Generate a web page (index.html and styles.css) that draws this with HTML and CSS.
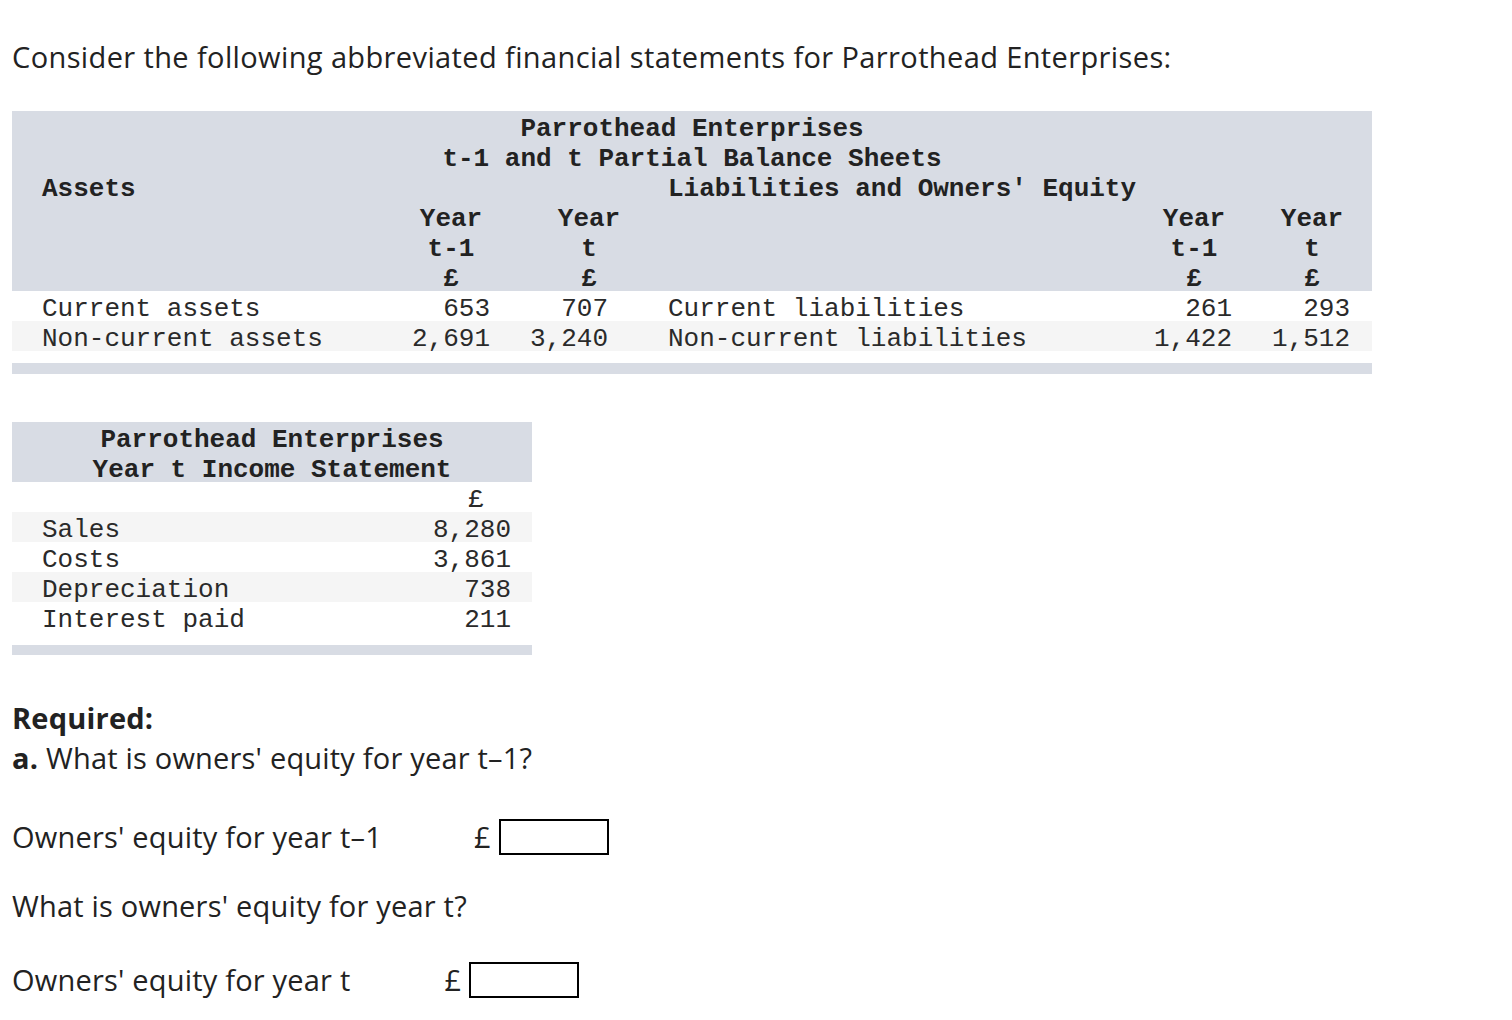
FILE: index.html
```html
<!DOCTYPE html>
<html>
<head>
<meta charset="utf-8">
<link rel="stylesheet" href="styles.css">
</head>
<body>
<p class="intro">Consider the following abbreviated financial statements for Parrothead Enterprises:</p>

<table class="fin bs">
  <colgroup>
    <col class="c-a"><col class="c-b"><col class="c-c"><col class="c-d"><col class="c-e"><col class="c-f">
  </colgroup>
  <thead>
    <tr class="hd"><th colspan="6" class="ctr">Parrothead Enterprises</th></tr>
    <tr class="hd"><th colspan="6" class="ctr">t-1 and t Partial Balance Sheets</th></tr>
    <tr class="hd"><th colspan="3" class="lbl-a">Assets</th><th colspan="3" class="lbl-d">Liabilities and Owners' Equity</th></tr>
    <tr class="hd"><th></th><th class="h-b">Year</th><th class="h-c">Year</th><th></th><th class="h-e">Year</th><th class="h-f">Year</th></tr>
    <tr class="hd"><th></th><th class="h-b">t-1</th><th class="h-c">t</th><th></th><th class="h-e">t-1</th><th class="h-f">t</th></tr>
    <tr class="hd"><th></th><th class="h-b">£</th><th class="h-c">£</th><th></th><th class="h-e">£</th><th class="h-f">£</th></tr>
  </thead>
  <tbody>
    <tr><td class="lbl-a">Current assets</td><td class="n-b">653</td><td class="n-c">707</td><td class="lbl-d">Current liabilities</td><td class="n-e">261</td><td class="n-f">293</td></tr>
    <tr class="alt"><td class="lbl-a">Non-current assets</td><td class="n-b">2,691</td><td class="n-c">3,240</td><td class="lbl-d">Non-current liabilities</td><td class="n-e">1,422</td><td class="n-f">1,512</td></tr>
    <tr class="gap"><td colspan="6"></td></tr>
    <tr class="bar"><td colspan="6"></td></tr>
  </tbody>
</table>

<table class="fin is">
  <colgroup><col class="i-a"><col class="i-b"></colgroup>
  <thead>
    <tr class="hd"><th colspan="2" class="ctr">Parrothead Enterprises</th></tr>
    <tr class="hd"><th colspan="2" class="ctr">Year t Income Statement</th></tr>
  </thead>
  <tbody>
    <tr><td></td><td class="i-cur">£</td></tr>
    <tr class="alt"><td class="lbl-a">Sales</td><td class="i-n">8,280</td></tr>
    <tr><td class="lbl-a">Costs</td><td class="i-n">3,861</td></tr>
    <tr class="alt"><td class="lbl-a">Depreciation</td><td class="i-n">738</td></tr>
    <tr><td class="lbl-a">Interest paid</td><td class="i-n">211</td></tr>
    <tr class="gap2"><td colspan="2"></td></tr>
    <tr class="bar2"><td colspan="2"></td></tr>
  </tbody>
</table>

<div class="req">
  <p class="req-title">Required:</p>
  <p class="q"><b>a.</b> What is owners' equity for year t–1?</p>
  <div class="ans ans1"><span class="ans-lbl">Owners' equity for year t–1</span><span class="cur cur1">£</span><span class="box"></span></div>
  <p class="q q2">What is owners' equity for year t?</p>
  <div class="ans ans2"><span class="ans-lbl">Owners' equity for year t</span><span class="cur cur2">£</span><span class="box"></span></div>
</div>
</body>
</html>
```

FILE: styles.css
```css
html, body {
  margin: 0;
  padding: 0;
  background: #fff;
}
body {
  padding: 37px 12px 0 12px;
  font-family: "Open Sans", Lato, sans-serif;
  color: #222;
}
.intro {
  margin: 0;
  font-size: 29px;
  letter-spacing: 0.38px;
  line-height: 40px;
}
.fin {
  border-collapse: collapse;
  table-layout: fixed;
  font-family: "Liberation Mono", "Courier New", monospace;
  font-size: 26px;
  color: #222;
}
.fin th, .fin td {
  padding: 6px 0 0 0;
  height: 24px;
  line-height: 24px;
  white-space: nowrap;
  overflow: visible;
}
.fin td { color: #2a2a2a; }
.fin th { font-weight: bold; }
.bs {
  width: 1360px;
  margin-top: 34px;
}
.c-a { width: 388px; }
.c-b { width: 102px; }
.c-c { width: 146px; }
.c-d { width: 495px; }
.c-e { width: 102px; }
.c-f { width: 127px; }
.hd th { background: #d8dce4; }
.ctr { text-align: center; }
.lbl-a { text-align: left; padding-left: 30px !important; }
.lbl-d { text-align: left; padding-left: 20px !important; }
.h-b, .h-e { text-align: center; }
.h-c { text-align: center; padding-left: 28px !important; }
.h-f { text-align: center; padding-left: 7px !important; }
.n-b { text-align: right; padding-right: 12px !important; }
.n-c { text-align: right; padding-right: 40px !important; }
.n-e { text-align: right; padding-right: 13px !important; }
.n-f { text-align: right; padding-right: 22px !important; }
.alt td { background: #f5f5f5; }
.fin .gap td { height: 12px; line-height: 12px; padding: 0; }
.fin .bar td { height: 11px; line-height: 11px; padding: 0; background: #d8dce4; }

.is {
  width: 520px;
  margin-top: 48px;
}
.i-a { width: 408px; }
.i-b { width: 112px; }
.i-cur { text-align: center; }
.i-n { text-align: right; padding-right: 21px !important; }
.fin .gap2 td { height: 13px; line-height: 13px; padding: 0; }
.fin .bar2 td { height: 10px; line-height: 10px; padding: 0; background: #d8dce4; }

.req {
  margin-top: 43px;
  font-size: 29px;
  letter-spacing: 0.2px;
  line-height: 40px;
}
.req p { margin: 0; }
.req-title { font-weight: bold; }
.q b { font-weight: bold; }
.ans {
  display: flex;
  align-items: center;
  height: 40px;
}
.ans1 { margin-top: 39px; }
.q2 { margin-top: 29px !important; }
.ans2 { margin-top: 34px; }
.cur { margin-right: 8px; }
.cur1 { margin-left: 92px; }
.cur2 { margin-left: 94px; }
.box {
  display: inline-block;
  width: 106px;
  height: 32px;
  border: 2px solid #000;
  background: #fff;
}
```
